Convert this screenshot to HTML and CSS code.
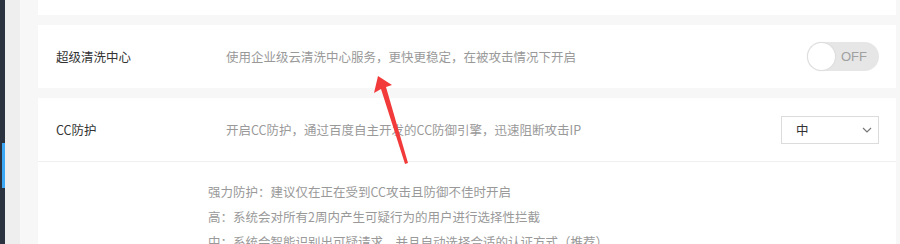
FILE: index.html
```html
<!DOCTYPE html>
<html lang="zh-CN">
<head>
    <meta charset="UTF-8">
    <title>安全设置</title>
    <link rel="stylesheet" href="styles.css">
</head>
<body>
    <div class="sidebar">
        <div class="active-mark"></div>
    </div>
    <div class="gutter"></div>
    <div class="main">
        <div class="card card-top"></div>

        <div class="card">
            <div class="row">
                <div class="row-title">超级清洗中心</div>
                <div class="row-desc">使用企业级云清洗中心服务，更快更稳定，在被攻击情况下开启</div>
                <div class="switch">
                    <span class="knob"></span>
                    <span class="switch-text">OFF</span>
                </div>
            </div>
        </div>

        <div class="card">
            <div class="row row-split">
                <div class="row-title">CC防护</div>
                <div class="row-desc">开启CC防护，通过百度自主开发的CC防御引擎，迅速阻断攻击IP</div>
                <div class="select">
                    <span>中</span>
                    <svg class="chevron" width="10" height="6" viewBox="0 0 10 6">
                        <path d="M1 1 L5 5 L9 1" fill="none" stroke="#777" stroke-width="1.2"/>
                    </svg>
                </div>
            </div>
            <div class="level-notes">
                <p>强力防护：建议仅在正在受到CC攻击且防御不佳时开启</p>
                <p>高：系统会对所有2周内产生可疑行为的用户进行选择性拦截</p>
                <p>中：系统会智能识别出可疑请求，并且自动选择合适的认证方式（推荐）</p>
            </div>
        </div>
    </div>

    <!-- annotation arrow drawn over the screenshot -->
    <svg class="arrow" width="900" height="244" viewBox="0 0 900 244">
        <polygon points="378,76 374,93 381,89 405,164 408,163 386,87 392,85" fill="#f23a3a"/>
    </svg>
</body>
</html>
```

FILE: styles.css
```css
body {
    margin: 0;
    height: 244px;
    overflow: hidden;
    display: flex;
    font-family: "Noto Sans CJK SC", "Microsoft YaHei", sans-serif;
    font-size: 12.5px;
    background-color: #f7f7f7;
}
.sidebar {
    width: 5px;
    background-color: #2b3340;
    padding-top: 143px;
}
.active-mark {
    margin-left: 2px;
    width: 3px;
    height: 45px;
    background-color: #3da8f5;
}
.gutter {
    width: 15px;
    background-color: #eeeeee;
}
.main {
    flex: 1;
    padding: 0 4px 0 18px;
}
.card {
    background: #fff;
    margin-bottom: 10px;
}
.card-top {
    height: 15px;
}
.row {
    height: 63px;
    display: flex;
    align-items: center;
    padding: 0 17px 0 18px;
}
.row-split {
    height: 63px;
    border-bottom: 1px solid #efefef;
}
.row-title {
    width: 170px;
    color: #333;
}
.row-desc {
    flex: 1;
    color: #999;
}
.switch {
    width: 72px;
    height: 29px;
    border-radius: 15px;
    background-color: #e6e6e6;
    display: flex;
    align-items: center;
    box-sizing: border-box;
}
.knob {
    width: 27px;
    height: 27px;
    margin-left: 1px;
    border-radius: 50%;
    background: #fff;
    box-shadow: 0 0 1px 1px #ddd;
}
.switch-text {
    margin-left: 6px;
    font-family: "Liberation Sans", Arial, sans-serif;
    font-size: 13px;
    color: #a0a0a0;
}
.select {
    width: 98px;
    height: 28px;
    box-sizing: border-box;
    border: 1px solid #dcdcdc;
    display: flex;
    align-items: center;
    justify-content: space-between;
    padding: 0 6px 0 14px;
    color: #333;
}
.level-notes {
    padding: 17px 0 0 170px;
    color: #999;
}
.level-notes p {
    margin: 0;
    line-height: 25px;
}
.arrow {
    position: absolute;
    left: 0;
    top: 0;
    pointer-events: none;
}
```
